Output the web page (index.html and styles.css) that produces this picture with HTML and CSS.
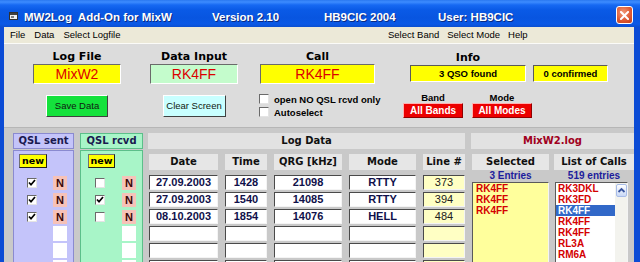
FILE: index.html
```html
<!DOCTYPE html>
<html lang="en">
    <head>
        <meta charset="UTF-8" />
        <title>MW2Log Add-On for MixW</title>
        <link rel="stylesheet" href="styles.css">
    </head>

    <body>
        <div class="window">
            <div class="titlebar">
                <svg class="app-icon" width="9" height="8" viewBox="0 0 9 8">
                    <rect x="0.5" y="0.5" width="8" height="7" fill="#f0f0f0" stroke="#303030" />
                    <rect x="1" y="1" width="7" height="2" fill="#404040" />
                    <rect x="2" y="4" width="3" height="2" fill="#808080" />
                </svg>
                <span class="t1">MW2Log&nbsp; Add-On for MixW</span>
                <span class="t2">Version 2.10</span>
                <span class="t3">HB9CIC 2004</span>
                <span class="t4">User: HB9CIC</span>
                <span class="close">
                    <svg width="9" height="9" viewBox="0 0 9 9">
                        <path d="M1 1 L8 8 M8 1 L1 8" stroke="#fff" stroke-width="2" stroke-linecap="square" />
                    </svg>
                </span>
            </div>

            <div class="client">
                <div class="menubar">
                    <div class="menu-left">
                        <span>File</span>
                        <span>Data</span>
                        <span>Select Logfile</span>
                    </div>
                    <div class="menu-right">
                        <span>Select Band</span>
                        <span>Select Mode</span>
                        <span>Help</span>
                    </div>
                </div>

                <div class="top">
                    <div class="col col-a">
                        <div class="lbl">Log File</div>
                        <div class="field yellow">MixW2</div>
                        <div class="btn save">Save Data</div>
                    </div>
                    <div class="col col-b">
                        <div class="lbl">Data Input</div>
                        <div class="field mint">RK4FF</div>
                        <div class="btn clear">Clear Screen</div>
                    </div>
                    <div class="col col-c">
                        <div class="lbl">Call</div>
                        <div class="field yellow">RK4FF</div>
                        <div class="checks">
                            <div class="chkrow"><span class="cb"></span>open NO QSL rcvd only</div>
                            <div class="chkrow"><span class="cb"></span>Autoselect</div>
                        </div>
                    </div>
                    <div class="col col-d">
                        <div class="info-row">
                            <div class="info-group">
                                <div class="lbl info-lbl">Info</div>
                                <div class="infobox">3 QSO found</div>
                            </div>
                            <div class="infobox confirmed">0 confirmed</div>
                        </div>
                        <div class="sel-row">
                            <div class="sel-group">
                                <div class="sel-lbl">Band</div>
                                <div class="redbtn">All Bands</div>
                            </div>
                            <div class="sel-group">
                                <div class="sel-lbl">Mode</div>
                                <div class="redbtn">All Modes</div>
                            </div>
                        </div>
                    </div>
                </div>

                <div class="bottom">
                    <div class="qsl sent">
                        <div class="qsl-head">QSL sent</div>
                        <div class="qsl-body">
                            <div class="newbtn">new</div>
                            <div class="qrows">
                                <div class="qrow"><span class="cb on"></span><span class="ncell">N</span></div>
                                <div class="qrow"><span class="cb on"></span><span class="ncell">N</span></div>
                                <div class="qrow"><span class="cb on"></span><span class="ncell">N</span></div>
                                <div class="qrow"><span class="cb none"></span><span class="ncell blank"></span></div>
                                <div class="qrow"><span class="cb none"></span><span class="ncell blank"></span></div>
                                <div class="qrow"><span class="cb none"></span><span class="ncell blank"></span></div>
                            </div>
                        </div>
                    </div>

                    <div class="qsl rcvd">
                        <div class="qsl-head">QSL rcvd</div>
                        <div class="qsl-body">
                            <div class="newbtn">new</div>
                            <div class="qrows">
                                <div class="qrow"><span class="cb"></span><span class="ncell">N</span></div>
                                <div class="qrow"><span class="cb on"></span><span class="ncell">N</span></div>
                                <div class="qrow"><span class="cb"></span><span class="ncell">N</span></div>
                                <div class="qrow"><span class="cb none"></span><span class="ncell blank"></span></div>
                                <div class="qrow"><span class="cb none"></span><span class="ncell blank"></span></div>
                                <div class="qrow"><span class="cb none"></span><span class="ncell blank"></span></div>
                            </div>
                        </div>
                    </div>

                    <div class="logpanel">
                        <div class="panel-head">Log Data</div>
                        <div class="loggrid heads">
                            <div class="ch">Date</div>
                            <div class="ch">Time</div>
                            <div class="ch">QRG [kHz]</div>
                            <div class="ch">Mode</div>
                            <div class="ch">Line #</div>
                        </div>
                        <div class="loggrid rows">
                            <div class="cell">27.09.2003</div><div class="cell">1428</div><div class="cell">21098</div><div class="cell">RTTY</div><div class="cell ln">373</div>
                            <div class="cell">27.09.2003</div><div class="cell">1540</div><div class="cell">14085</div><div class="cell">RTTY</div><div class="cell ln">394</div>
                            <div class="cell">08.10.2003</div><div class="cell">1854</div><div class="cell">14076</div><div class="cell">HELL</div><div class="cell ln">484</div>
                            <div class="cell"></div><div class="cell"></div><div class="cell"></div><div class="cell"></div><div class="cell ln"></div>
                            <div class="cell"></div><div class="cell"></div><div class="cell"></div><div class="cell"></div><div class="cell ln"></div>
                            <div class="cell"></div><div class="cell"></div><div class="cell"></div><div class="cell"></div><div class="cell ln"></div>
                        </div>
                    </div>

                    <div class="listpanel">
                        <div class="panel-head logname">MixW2.log</div>
                        <div class="lists">
                            <div class="listcol">
                                <div class="ch">Selected</div>
                                <div class="count">3 Entries</div>
                                <div class="listbox selected-list">
                                    <div class="item">RK4FF</div>
                                    <div class="item">RK4FF</div>
                                    <div class="item">RK4FF</div>
                                </div>
                            </div>
                            <div class="listcol">
                                <div class="ch">List of Calls</div>
                                <div class="count">519 entries</div>
                                <div class="listbox calls-box">
                                    <div class="calls-items">
                                        <div class="item">RK3DKL</div>
                                        <div class="item">RK3FD</div>
                                        <div class="item active">RK4FF</div>
                                        <div class="item">RK4FF</div>
                                        <div class="item">RK4FF</div>
                                        <div class="item">RL3A</div>
                                        <div class="item">RM6A</div>
                                    </div>
                                    <div class="scroll">
                                        <span class="sbtn">
                                            <svg width="9" height="9" viewBox="0 0 9 9">
                                                <path d="M1.5 6 L4.5 3 L7.5 6" fill="none" stroke="#3a56a0" stroke-width="1.8" />
                                            </svg>
                                        </span>
                                    </div>
                                </div>
                            </div>
                        </div>
                    </div>
                </div>
            </div>
        </div>
    </body>
</html>
```

FILE: styles.css
```css
* {
    box-sizing: border-box;
}
html,
body {
    margin: 0;
}
body {
    width: 640px;
    height: 262px;
    overflow: hidden;
    font-family: "Liberation Sans", Arial, sans-serif;
    color: #000;
}
.window {
    width: 640px;
    height: 262px;
    display: flex;
    flex-direction: column;
    background: #0b4bd5;
    overflow: hidden;
}

/* title bar */
.titlebar {
    height: 27px;
    flex: none;
    display: flex;
    align-items: center;
    padding: 6px 7px 0 9px;
    background: linear-gradient(to bottom, #2a78f0 0, #3d8cff 2px, #1669f2 5px, #0a5ae6 10px, #0855e0 18px, #0a58e6 24px, #0b4fd0 27px);
    color: #fff;
    font-size: 11.5px;
    font-weight: bold;
    white-space: nowrap;
    text-shadow: 1px 1px 0 #0a2a80;
}
.app-icon {
    align-self: flex-start;
    margin: 6px 6px 0 0;
}
.t1 {
    width: 188px;
}
.t2 {
    width: 112px;
}
.t3 {
    width: 114px;
}
.close {
    margin-left: auto;
    align-self: flex-start;
    width: 17px;
    height: 18px;
    border: 1px solid #fff;
    border-radius: 3px;
    background: radial-gradient(circle at 40% 35%, #f29a78, #dc5630 60%, #c03c18);
    display: flex;
    align-items: center;
    justify-content: center;
}

/* client area */
.client {
    flex: 1;
    margin: 0 6px 0 4px;
    background: #dcdcdc;
    display: flex;
    flex-direction: column;
    overflow: hidden;
}
.menubar {
    height: 17px;
    flex: none;
    display: flex;
    background: #ece9d8;
    border-bottom: 1px solid #fbfbf8;
    font-size: 9.5px;
    line-height: 16px;
}
.menu-left {
    width: 384px;
    padding-left: 6px;
    display: flex;
    gap: 9px;
}
.menu-right {
    display: flex;
    gap: 8px;
}

/* upper form */
.top {
    height: 83px;
    flex: none;
    display: flex;
    align-items: flex-start;
    padding: 6px 0 0 29px;
}
.col {
    display: flex;
    flex-direction: column;
}
.col-a,
.col-b {
    width: 88px;
    align-items: center;
}
.col-b {
    margin-left: 29px;
}
.col-c {
    width: 115px;
    margin-left: 22px;
}
.col-d {
    width: 205px;
    margin-left: 28px;
}
.lbl {
    width: 100%;
    font: bold 11px/14px "DejaVu Sans", Verdana, sans-serif;
    text-align: center;
}
.field {
    width: 100%;
    height: 20px;
    border: 1px solid;
    border-color: #6a6a6a #fff #fff #6a6a6a;
    font-size: 14px;
    line-height: 18px;
    text-align: center;
    color: #dc0000;
}
.yellow {
    background: #ffff00;
}
.mint {
    background: #c4fccc;
}
.btn {
    margin-top: 11px;
    height: 22px;
    border: 1px solid;
    border-color: #fff #404040 #404040 #fff;
    font-size: 9.5px;
    line-height: 20px;
    text-align: center;
    color: #102010;
}
.save {
    width: 62px;
    background: #14e23c;
}
.clear {
    width: 63px;
    background: #c8ffff;
}
.checks {
    margin-top: 10px;
    display: flex;
    flex-direction: column;
    gap: 3px;
}
.chkrow {
    height: 10px;
    margin-left: -1px;
    display: flex;
    align-items: center;
    gap: 5px;
    font-size: 9.5px;
    font-weight: bold;
    white-space: nowrap;
}
.cb {
    flex: none;
    width: 10px;
    height: 10px;
    background: #fff;
    border: 1px solid;
    border-color: #6a6a6a #e4e4e4 #e4e4e4 #6a6a6a;
}
.cb.on {
    background: #fff url("data:image/svg+xml,%3Csvg xmlns='http://www.w3.org/2000/svg' width='8' height='8'%3E%3Cpath d='M1 3.5 L3 5.8 L7 1' fill='none' stroke='%23000' stroke-width='1.7'/%3E%3C/svg%3E") center no-repeat;
}
.cb.none {
    visibility: hidden;
}
.info-row {
    display: flex;
    align-items: flex-end;
    padding-left: 7px;
}
.info-group {
    width: 116px;
}
.info-lbl {
    line-height: 15px;
}
.infobox {
    height: 17px;
    background: #ffff00;
    border: 1px solid;
    border-color: #5a5a5a #fff #fff #5a5a5a;
    font-size: 9.5px;
    font-weight: bold;
    line-height: 15px;
    text-align: center;
}
.confirmed {
    width: 75px;
    margin-left: 7px;
}
.sel-row {
    display: flex;
    gap: 9px;
    margin-top: 10px;
}
.sel-group {
    width: 60px;
}
.sel-lbl {
    font-size: 9.5px;
    font-weight: bold;
    line-height: 11px;
    text-align: center;
}
.redbtn {
    height: 15px;
    background: #ec0000;
    border: 1px solid;
    border-color: #ffb0b0 #900000 #900000 #ffb0b0;
    color: #fff;
    font-size: 10px;
    font-weight: bold;
    line-height: 13px;
    text-align: center;
}

/* lower part */
.bottom {
    flex: 1;
    display: flex;
    align-items: flex-start;
    padding: 5px 0 0 9px;
    background: #c9c9c9;
    border-top: 1px solid #b6b6b6;
}
.qsl {
    display: flex;
    flex-direction: column;
    gap: 1px;
}
.sent {
    width: 62px;
}
.rcvd {
    width: 64px;
    margin-left: 6px;
}
.qsl-head {
    height: 16px;
    border: 1px solid;
    font: bold 10px/14px "DejaVu Sans", Verdana, sans-serif;
    text-align: center;
    color: #1a1a50;
}
.qsl-body {
    height: 130px;
    border: 1px solid;
}
.sent .qsl-head,
.sent .qsl-body {
    background: #c4c4fa;
    border-color: #8a8ad0;
}
.rcvd .qsl-head,
.rcvd .qsl-body {
    background: #a8f5c8;
    border-color: #5cbf8a;
}
.newbtn {
    width: 28px;
    height: 14px;
    margin: 3px 0 0 5px;
    background: #ffff00;
    border: 1px solid;
    border-color: #707070 #202020 #202020 #707070;
    font: bold 9.5px/12px "DejaVu Sans", Verdana, sans-serif;
    text-align: center;
}
.rcvd .newbtn {
    width: 27px;
    margin-left: 7px;
}
.qrows {
    margin-top: 7px;
    display: flex;
    flex-direction: column;
    gap: 2px;
}
.qrow {
    height: 15px;
    display: flex;
    align-items: center;
    padding-left: 13px;
}
.qrow .cb {
    margin-right: 16px;
}
.rcvd .qrow {
    padding-left: 14px;
}
.rcvd .qrow .cb {
    margin-right: 17px;
}
.ncell {
    width: 14px;
    height: 14px;
    background: #f6c2b8;
    font-size: 11px;
    font-weight: bold;
    line-height: 14px;
    text-align: center;
    color: #3a0808;
}
.ncell.blank {
    height: 15px;
    background: #fff;
}

.logpanel {
    width: 318px;
    margin-left: 5px;
}
.panel-head {
    height: 16px;
    background: #e2e2e2;
    font: bold 10px/16px "DejaVu Sans", Verdana, sans-serif;
    text-align: center;
    color: #101010;
}
.loggrid {
    display: grid;
    grid-template-columns: 69px 42px 68px 67px 42px;
    column-gap: 7px;
    padding-left: 1px;
    margin-top: 5px;
}
.rows {
    grid-auto-rows: 15px;
    row-gap: 2px;
}
.ch {
    height: 16px;
    background: #e6e6e6;
    font: bold 10px/16px "DejaVu Sans", Verdana, sans-serif;
    text-align: center;
    color: #101010;
    white-space: nowrap;
}
.cell {
    background: #fff;
    border: 1px solid;
    border-color: #4a4a4a #f4f4f4 #f4f4f4 #4a4a4a;
    font-size: 11px;
    font-weight: bold;
    line-height: 13px;
    text-align: center;
    color: #10104a;
}
.cell.ln {
    background: #ffffc4;
    font-weight: normal;
    color: #202020;
}

.listpanel {
    width: 163px;
    margin-left: 6px;
}
.logname {
    color: #a00020;
}
.lists {
    display: grid;
    grid-template-columns: 77px 80px;
    column-gap: 5px;
    padding-left: 1px;
    margin-top: 5px;
}
.count {
    font-size: 10px;
    font-weight: bold;
    line-height: 12px;
    text-align: center;
    color: #1c1c9c;
}
.listbox {
    height: 100px;
    border: 1px solid;
    border-color: #5a5a5a #f4f4f4 #f4f4f4 #5a5a5a;
}
.selected-list {
    background: #ffff9c;
    padding-left: 3px;
}
.item {
    font-size: 10px;
    font-weight: bold;
    line-height: 11px;
    color: #d40000;
}
.calls-box {
    width: 73px;
    margin-left: 1px;
    display: flex;
    background: #fff;
}
.calls-items {
    flex: 1;
}
.calls-items .item {
    padding-left: 2px;
}
.calls-items .active {
    background: #3168c8;
    color: #fff;
}
.scroll {
    width: 12px;
    background: #f3f3ee;
}
.sbtn {
    display: flex;
    align-items: center;
    justify-content: center;
    width: 11px;
    height: 13px;
    margin: 1px 0 0 1px;
    background: linear-gradient(#ffffff, #c9d8f6);
    border: 1px solid #a8bce8;
    border-radius: 2px;
}
```
